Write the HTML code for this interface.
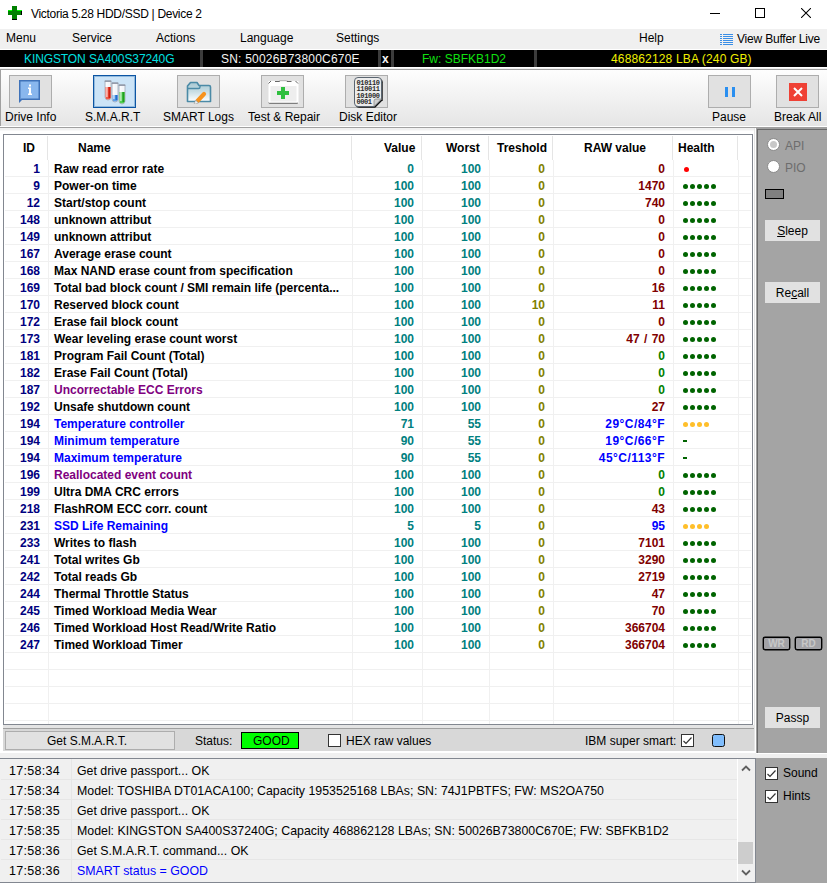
<!DOCTYPE html>
<html><head><meta charset="utf-8">
<style>
*{margin:0;padding:0;box-sizing:border-box}
html,body{width:827px;height:883px;overflow:hidden;background:#f0f0f0;font-family:"Liberation Sans",sans-serif;font-size:12px;color:#000}
.a{position:absolute}
.t{position:absolute;white-space:pre;line-height:14px}
/* title */
#title{left:0;top:0;width:827px;height:29px;background:#fff}
#menu{left:0;top:29px;width:827px;height:20px;background:#f0f0f0}
#infobar{left:0;top:50px;width:827px;height:17px;background:#000}
.sep{position:absolute;top:50px;width:3px;height:17px;background:#3c3c3c}
#toolbar{left:1px;top:69px;width:826px;height:57px;background:linear-gradient(#fefefe,#e5e5e5);border-top:1px solid #a0a0a0}
#tbl{left:0;top:69px;width:1px;height:57px;background:#a0a0a0}
.btn{position:absolute;top:75px;width:43px;height:33px;background:#e1e1e1;border:1px solid #adadad}
.btn.on{background:#cce4f7;border:1px solid #0c55a3;box-shadow:inset 0 0 0 1px rgba(14,89,166,0.3)}
.lbl{position:absolute;top:110px;white-space:pre;font-size:12px;line-height:14px}
/* grid */
#grid{left:3px;top:134px;width:750px;height:591px;background:#fff;border:1px solid #828790}
.row{position:absolute;left:0;width:827px;height:17px;font-weight:bold;font-size:12px}
.c{position:absolute;top:2px;white-space:pre;line-height:14px}
.id{right:calc(827px - 40px);color:#000080}
.nm{left:54px}
.val{right:calc(827px - 414px);color:#008080}
.wst{right:calc(827px - 481px);color:#008080}
.th{right:calc(827px - 545px);color:#808000}
.raw{right:calc(827px - 665px)}
.hl{position:absolute;left:683px;top:7px;height:6px;display:flex}
.d{display:block;width:5px;height:5px;border-radius:50%;margin-right:2px}
.d.g{background:#006400}
.d.y{background:#ffbf2a}
.d.rd{background:#ff0000;margin-left:1px}
.dash{display:block;width:4px;height:2px;background:#006400;margin-top:1px}
.hline{position:absolute;left:5px;width:746px;height:1px;background:#f0f0f0}
.vline{position:absolute;top:160px;width:1px;height:564px;background:#f0f0f0}
.vhead{position:absolute;top:136px;width:1px;height:24px;background:#e5e5e5}
.hd{position:absolute;top:141px;font-weight:bold;white-space:pre;line-height:14px}
/* right panel */
#rp{left:756px;top:128px;width:71px;height:625px;background:#a4a4a4;border-left:1px solid #a0a0a0;border-top:1px solid #a0a0a0;box-shadow:inset 1px 1px 0 #696969}
.rbtn{position:absolute;left:765px;width:55px;height:21px;background:#e1e1e1;text-align:center;line-height:23px;overflow:hidden}
/* status bar */
#sb{left:3px;top:728px;width:751px;height:23px;background:#d8d8d8;border-top:1px solid #a0a0a0}
/* log */
#log{left:0;top:758px;width:756px;height:125px;background:#f0f0f0;border-top:1px solid #828790;border-right:1px solid #828790;border-bottom:1px solid #828790}
.lrow{position:absolute;left:0;width:737px;height:20px}
.lt{position:absolute;left:9px;top:5px;white-space:pre;font-size:12.5px;line-height:14px;letter-spacing:0.3px}
.lm{position:absolute;left:77px;top:5px;white-space:pre;font-size:12.35px;line-height:14px}
.lline{position:absolute;left:1px;width:736px;height:1px;background:#e6e6e6}
#rp2{left:756px;top:758px;width:71px;height:125px;background:#a4a4a4}
.cb{position:absolute;width:13px;height:13px;background:#fff;border:1px solid #333}
</style></head><body>

<!-- title bar -->
<div id="title" class="a"></div>
<svg class="a" style="left:8px;top:6px" width="14" height="14" viewBox="0 0 14 14" shape-rendering="crispEdges">
<rect x="4" y="0" width="5" height="14" fill="#008000"/><rect x="0" y="4" width="14" height="5" fill="#008000"/>
<rect x="0" y="4" width="4" height="1" fill="#00ff00"/><rect x="9" y="4" width="5" height="1" fill="#00ff00"/>
<rect x="13" y="5" width="1" height="4" fill="#000"/><rect x="4" y="13" width="5" height="1" fill="#000"/>
</svg>
<div class="t" style="left:31px;top:7px;font-size:12px;letter-spacing:-0.3px">Victoria 5.28 HDD/SSD | Device 2</div>
<div class="a" style="left:710px;top:13px;width:10px;height:1px;background:#000"></div>
<div class="a" style="left:755px;top:8px;width:10px;height:10px;border:1px solid #000"></div>
<svg class="a" style="left:801px;top:8px" width="10" height="10" viewBox="0 0 10 10"><path d="M0 0L10 10M10 0L0 10" stroke="#000" stroke-width="1.05"/></svg>

<!-- menu -->
<div id="menu" class="a"></div>
<div class="t" style="left:6px;top:31px">Menu</div>
<div class="t" style="left:72px;top:31px">Service</div>
<div class="t" style="left:156px;top:31px">Actions</div>
<div class="t" style="left:240px;top:31px">Language</div>
<div class="t" style="left:336px;top:31px">Settings</div>
<div class="t" style="left:639px;top:31px">Help</div>
<svg class="a" style="left:720px;top:34px" width="13" height="12" viewBox="0 0 13 12">
<g fill="#3a8ee6"><rect x="0" y="0" width="2" height="1"/><rect x="3" y="0" width="10" height="1"/>
<rect x="0" y="2" width="2" height="1"/><rect x="3" y="2" width="10" height="1"/>
<rect x="0" y="4" width="2" height="1"/><rect x="3" y="4" width="10" height="1"/>
<rect x="0" y="6" width="2" height="1"/><rect x="3" y="6" width="10" height="1"/>
<rect x="0" y="8" width="2" height="1"/><rect x="3" y="8" width="10" height="1"/>
<rect x="0" y="10" width="2" height="1"/><rect x="3" y="10" width="10" height="1"/></g></svg>
<div class="t" style="left:737px;top:32px;letter-spacing:-0.2px">View Buffer Live</div>

<!-- info bar -->
<div class="a" style="left:0;top:49px;width:827px;height:1px;background:#fff"></div>
<div id="infobar" class="a"></div>
<div class="sep" style="left:200px"></div>
<div class="sep" style="left:378px"></div>
<div class="sep" style="left:391px"></div>
<div class="sep" style="left:534px"></div>
<div class="t" style="left:24px;top:52px;color:#00e0e0;letter-spacing:-0.1px">KINGSTON SA400S37240G</div>
<div class="t" style="left:221px;top:52px;color:#f4f4f4;letter-spacing:0.2px">SN: 50026B73800C670E</div>
<div class="t" style="left:382px;top:52px;color:#f4f4f4;font-weight:bold">x</div>
<div class="t" style="left:422px;top:52px;color:#10e010">Fw: SBFKB1D2</div>
<div class="t" style="left:611px;top:52px;color:#f0f000;letter-spacing:0.15px">468862128 LBA (240 GB)</div>
<div class="a" style="left:0;top:67px;width:827px;height:1px;background:#fff"></div>

<!-- toolbar -->
<div id="toolbar" class="a"></div>
<div id="tbl" class="a"></div>
<div class="btn" style="left:9px"></div>
<svg class="a" style="left:18px;top:79px" width="24" height="25" viewBox="0 0 24 25">
<path d="M1 1H22V21H4L1 24Z" fill="#3f72b9"/>
<path d="M2.5 2.5H20.5V19.5H3.2L2.5 20.5Z" fill="#89b7ee"/>
<rect x="11" y="5.5" width="2" height="2" fill="#fff"/>
<path d="M10 8.5H13V14.5H14V16H10V14.5H11V10H10Z" fill="#fff"/>
</svg>
<div class="lbl" style="left:5px">Drive Info</div>

<div class="btn on" style="left:93px"></div>
<svg class="a" style="left:104px;top:80px" width="22" height="26" viewBox="0 0 22 26"><path d="M1 1H7V17Q7 20 4 20Q1 20 1 17Z" fill="#f4f6fa" stroke="#a8b0bc" stroke-width="0.9"/><path d="M1.5 7H6.5V17Q6.5 19.5 4 19.5Q1.5 19.5 1.5 17Z" fill="#f05a4a"/><rect x="4.5" y="7" width="2" height="11" fill="#d02010"/><rect x="2.3" y="2" width="1.2" height="15" fill="#ffffff" opacity="0.8"/><rect x="0.7" y="0.5" width="6.6" height="1.3" fill="#8890a0"/><path d="M8 3H14V19Q14 22 11 22Q8 22 8 19Z" fill="#f4f6fa" stroke="#a8b0bc" stroke-width="0.9"/><path d="M8.5 15H13.5V19Q13.5 21.5 11 21.5Q8.5 21.5 8.5 19Z" fill="#5fa0e8"/><rect x="11.5" y="15" width="2" height="5" fill="#2070d0"/><rect x="9.3" y="4" width="1.2" height="15" fill="#ffffff" opacity="0.8"/><rect x="7.7" y="2.5" width="6.6" height="1.3" fill="#8890a0"/><path d="M15 5H21V21Q21 24 18 24Q15 24 15 21Z" fill="#f4f6fa" stroke="#a8b0bc" stroke-width="0.9"/><path d="M15.5 12H20.5V21Q20.5 23.5 18 23.5Q15.5 23.5 15.5 21Z" fill="#50d050"/><rect x="18.5" y="12" width="2" height="10" fill="#20a020"/><rect x="16.3" y="6" width="1.2" height="15" fill="#ffffff" opacity="0.8"/><rect x="14.7" y="4.5" width="6.6" height="1.3" fill="#8890a0"/></svg>
<div class="lbl" style="left:85px">S.M.A.R.T</div>

<div class="btn" style="left:177px"></div>
<svg class="a" style="left:186px;top:81px" width="26" height="23" viewBox="0 0 26 23">
<defs><linearGradient id="fg" x1="0" y1="0" x2="0" y2="1"><stop offset="0" stop-color="#a9c8d2"/><stop offset="0.45" stop-color="#c5dce3"/><stop offset="1" stop-color="#ffffff"/></linearGradient></defs>
<path d="M1.5 5L4.5 1.5H11L13 4.5H23Q24.5 4.5 24.5 6V20.5H1.5Z" fill="url(#fg)" stroke="#4b8aa6" stroke-width="1.6" stroke-linejoin="round"/>
<path d="M1.5 7.5H12.5Q14 7.5 14 6V4.5" fill="none" stroke="#4b8aa6" stroke-width="1.4"/>
<path d="M9.5 19L16.5 11.5Q18 10 19.5 11.5Q21 13 19.5 14.5L12.5 22Z" fill="#f7931e"/>
<path d="M9.5 19L12.5 22L8 23.5Z" fill="#f0f0f0" stroke="#888" stroke-width="0.5"/>
</svg>
<div class="lbl" style="left:163px">SMART Logs</div>

<div class="btn" style="left:261px"></div>
<svg class="a" style="left:268px;top:79px" width="31" height="26" viewBox="0 0 31 26">
<rect x="0.5" y="2" width="30" height="22.3" fill="#ffffff"/>
<rect x="2.5" y="7" width="26" height="15.5" fill="#eeeeee"/>
<path d="M0.5 4.5L3 2M27.5 2L30 4.5M7 2.5H11.5V1.8M19 1.8V2.5H23.5M0.5 23.8L1.2 24.3H29.3L30 23.8" fill="none" stroke="#555" stroke-width="0.9"/>
<rect x="12" y="1" width="6.5" height="1.2" fill="#bbb"/>
<path d="M13 8H17V12H21V16H17V20H13V16H9V12H13Z" fill="#2fbf3f"/>
</svg>
<div class="lbl" style="left:248px">Test &amp; Repair</div>

<div class="btn" style="left:345px"></div>
<svg class="a" style="left:353px;top:76px" width="31" height="32" viewBox="0 0 31 32">
<path d="M5 1.5H25Q28.5 1.5 28.5 5V23L21 30.5H5Q1.5 30.5 1.5 27V5Q1.5 1.5 5 1.5Z" fill="#111" transform="translate(1.2,1.2)"/>
<path d="M5 1.5H25Q28.5 1.5 28.5 5V23L21 30.5H5Q1.5 30.5 1.5 27V5Q1.5 1.5 5 1.5Z" fill="#ececec" stroke="#5a6570" stroke-width="1"/>
<path d="M21 30.5V25Q21 23 23 23H28.5Z" fill="#d0d0d0" stroke="#777" stroke-width="0.6"/>
<g font-family="Liberation Mono" font-weight="bold" font-size="7" fill="#2a2a2a"><text x="3.5" y="8.5" textLength="23.5">010110</text><text x="3.5" y="15" textLength="23.5">110011</text><text x="3.5" y="21.5" textLength="23.5">101000</text><text x="3.5" y="28" textLength="15.5">0001</text></g>
</svg>
<div class="lbl" style="left:339px">Disk Editor</div>

<div class="btn" style="left:708px"></div>
<div class="a" style="left:725px;top:87px;width:3px;height:10px;background:#2a8ff0"></div>
<div class="a" style="left:732px;top:87px;width:3px;height:10px;background:#2a8ff0"></div>
<div class="lbl" style="left:712px">Pause</div>
<div class="btn" style="left:776px"></div>
<svg class="a" style="left:789px;top:83px" width="18" height="18" viewBox="0 0 18 18">
<rect width="18" height="18" fill="#ef4135"/><path d="M5 5L13 13M13 5L5 13" stroke="#fff" stroke-width="2"/></svg>
<div class="lbl" style="left:774px">Break All</div>

<!-- below toolbar -->
<div class="a" style="left:0;top:126px;width:827px;height:1px;background:#fff"></div>
<div class="a" style="left:0;top:127px;width:827px;height:1px;background:#a0a0a0"></div>
<div class="a" style="left:0;top:128px;width:755px;height:2px;background:#f0f0f0"></div>
<div class="a" style="left:0;top:130px;width:755px;height:1px;background:#f8f8f8"></div>
<div class="a" style="left:0;top:131px;width:756px;height:620px;background:#fff"></div>
<div class="a" style="left:754px;top:128px;width:1px;height:625px;background:#e6e6e6"></div>
<div class="a" style="left:755px;top:128px;width:1px;height:625px;background:#fff"></div>

<!-- grid -->
<div id="grid" class="a"></div>
<div class="hline" style="top:176px"></div><div class="hline" style="top:193px"></div><div class="hline" style="top:210px"></div><div class="hline" style="top:227px"></div><div class="hline" style="top:244px"></div><div class="hline" style="top:261px"></div><div class="hline" style="top:278px"></div><div class="hline" style="top:295px"></div><div class="hline" style="top:312px"></div><div class="hline" style="top:329px"></div><div class="hline" style="top:346px"></div><div class="hline" style="top:363px"></div><div class="hline" style="top:380px"></div><div class="hline" style="top:397px"></div><div class="hline" style="top:414px"></div><div class="hline" style="top:431px"></div><div class="hline" style="top:448px"></div><div class="hline" style="top:465px"></div><div class="hline" style="top:482px"></div><div class="hline" style="top:499px"></div><div class="hline" style="top:516px"></div><div class="hline" style="top:533px"></div><div class="hline" style="top:550px"></div><div class="hline" style="top:567px"></div><div class="hline" style="top:584px"></div><div class="hline" style="top:601px"></div><div class="hline" style="top:618px"></div><div class="hline" style="top:635px"></div><div class="hline" style="top:652px"></div><div class="hline" style="top:669px"></div><div class="hline" style="top:686px"></div><div class="hline" style="top:703px"></div><div class="hline" style="top:720px"></div>
<div class="vline" style="left:48px"></div><div class="vhead" style="left:47px"></div><div class="vline" style="left:352px"></div><div class="vhead" style="left:351px"></div><div class="vline" style="left:422px"></div><div class="vhead" style="left:421px"></div><div class="vline" style="left:489px"></div><div class="vhead" style="left:488px"></div><div class="vline" style="left:553px"></div><div class="vhead" style="left:552px"></div><div class="vline" style="left:673px"></div><div class="vhead" style="left:672px"></div><div class="vline" style="left:738px"></div><div class="vhead" style="left:737px"></div>
<div class="hd" style="left:23px">ID</div>
<div class="hd" style="left:78px">Name</div>
<div class="hd" style="left:384px">Value</div>
<div class="hd" style="left:446px">Worst</div>
<div class="hd" style="left:497px">Treshold</div>
<div class="hd" style="left:584px">RAW value</div>
<div class="hd" style="left:678px">Health</div>
<div class="row" style="top:160px"><span class="c id">1</span><span class="c nm" style="color:#000000">Raw read error rate</span><span class="c val">0</span><span class="c wst">100</span><span class="c th">0</span><span class="c raw" style="color:#800000">0</span><span class="hl"><i class="d rd"></i></span></div><div class="row" style="top:177px"><span class="c id">9</span><span class="c nm" style="color:#000000">Power-on time</span><span class="c val">100</span><span class="c wst">100</span><span class="c th">0</span><span class="c raw" style="color:#800000">1470</span><span class="hl"><i class="d g"></i><i class="d g"></i><i class="d g"></i><i class="d g"></i><i class="d g"></i></span></div><div class="row" style="top:194px"><span class="c id">12</span><span class="c nm" style="color:#000000">Start/stop count</span><span class="c val">100</span><span class="c wst">100</span><span class="c th">0</span><span class="c raw" style="color:#800000">740</span><span class="hl"><i class="d g"></i><i class="d g"></i><i class="d g"></i><i class="d g"></i><i class="d g"></i></span></div><div class="row" style="top:211px"><span class="c id">148</span><span class="c nm" style="color:#000000">unknown attribut</span><span class="c val">100</span><span class="c wst">100</span><span class="c th">0</span><span class="c raw" style="color:#800000">0</span><span class="hl"><i class="d g"></i><i class="d g"></i><i class="d g"></i><i class="d g"></i><i class="d g"></i></span></div><div class="row" style="top:228px"><span class="c id">149</span><span class="c nm" style="color:#000000">unknown attribut</span><span class="c val">100</span><span class="c wst">100</span><span class="c th">0</span><span class="c raw" style="color:#800000">0</span><span class="hl"><i class="d g"></i><i class="d g"></i><i class="d g"></i><i class="d g"></i><i class="d g"></i></span></div><div class="row" style="top:245px"><span class="c id">167</span><span class="c nm" style="color:#000000">Average erase count</span><span class="c val">100</span><span class="c wst">100</span><span class="c th">0</span><span class="c raw" style="color:#800000">0</span><span class="hl"><i class="d g"></i><i class="d g"></i><i class="d g"></i><i class="d g"></i><i class="d g"></i></span></div><div class="row" style="top:262px"><span class="c id">168</span><span class="c nm" style="color:#000000">Max NAND erase count from specification</span><span class="c val">100</span><span class="c wst">100</span><span class="c th">0</span><span class="c raw" style="color:#800000">0</span><span class="hl"><i class="d g"></i><i class="d g"></i><i class="d g"></i><i class="d g"></i><i class="d g"></i></span></div><div class="row" style="top:279px"><span class="c id">169</span><span class="c nm" style="color:#000000">Total bad block count / SMI remain life (percenta...</span><span class="c val">100</span><span class="c wst">100</span><span class="c th">0</span><span class="c raw" style="color:#800000">16</span><span class="hl"><i class="d g"></i><i class="d g"></i><i class="d g"></i><i class="d g"></i><i class="d g"></i></span></div><div class="row" style="top:296px"><span class="c id">170</span><span class="c nm" style="color:#000000">Reserved block count</span><span class="c val">100</span><span class="c wst">100</span><span class="c th">10</span><span class="c raw" style="color:#800000">11</span><span class="hl"><i class="d g"></i><i class="d g"></i><i class="d g"></i><i class="d g"></i><i class="d g"></i></span></div><div class="row" style="top:313px"><span class="c id">172</span><span class="c nm" style="color:#000000">Erase fail block count</span><span class="c val">100</span><span class="c wst">100</span><span class="c th">0</span><span class="c raw" style="color:#800000">0</span><span class="hl"><i class="d g"></i><i class="d g"></i><i class="d g"></i><i class="d g"></i><i class="d g"></i></span></div><div class="row" style="top:330px"><span class="c id">173</span><span class="c nm" style="color:#000000">Wear leveling erase count worst</span><span class="c val">100</span><span class="c wst">100</span><span class="c th">0</span><span class="c raw" style="color:#800000;word-spacing:1px">47 / 70</span><span class="hl"><i class="d g"></i><i class="d g"></i><i class="d g"></i><i class="d g"></i><i class="d g"></i></span></div><div class="row" style="top:347px"><span class="c id">181</span><span class="c nm" style="color:#000000">Program Fail Count (Total)</span><span class="c val">100</span><span class="c wst">100</span><span class="c th">0</span><span class="c raw" style="color:#008000">0</span><span class="hl"><i class="d g"></i><i class="d g"></i><i class="d g"></i><i class="d g"></i><i class="d g"></i></span></div><div class="row" style="top:364px"><span class="c id">182</span><span class="c nm" style="color:#000000">Erase Fail Count (Total)</span><span class="c val">100</span><span class="c wst">100</span><span class="c th">0</span><span class="c raw" style="color:#008000">0</span><span class="hl"><i class="d g"></i><i class="d g"></i><i class="d g"></i><i class="d g"></i><i class="d g"></i></span></div><div class="row" style="top:381px"><span class="c id">187</span><span class="c nm" style="color:#800080">Uncorrectable ECC Errors</span><span class="c val">100</span><span class="c wst">100</span><span class="c th">0</span><span class="c raw" style="color:#008000">0</span><span class="hl"><i class="d g"></i><i class="d g"></i><i class="d g"></i><i class="d g"></i><i class="d g"></i></span></div><div class="row" style="top:398px"><span class="c id">192</span><span class="c nm" style="color:#000000">Unsafe shutdown count</span><span class="c val">100</span><span class="c wst">100</span><span class="c th">0</span><span class="c raw" style="color:#800000">27</span><span class="hl"><i class="d g"></i><i class="d g"></i><i class="d g"></i><i class="d g"></i><i class="d g"></i></span></div><div class="row" style="top:415px"><span class="c id">194</span><span class="c nm" style="color:#0000ff">Temperature controller</span><span class="c val">71</span><span class="c wst">55</span><span class="c th">0</span><span class="c raw" style="color:#0000ff;letter-spacing:0.45px">29°C/84°F</span><span class="hl"><i class="d y"></i><i class="d y"></i><i class="d y"></i><i class="d y"></i></span></div><div class="row" style="top:432px"><span class="c id">194</span><span class="c nm" style="color:#0000ff">Minimum temperature</span><span class="c val">90</span><span class="c wst">55</span><span class="c th">0</span><span class="c raw" style="color:#0000ff;letter-spacing:0.45px">19°C/66°F</span><span class="hl"><i class="dash"></i></span></div><div class="row" style="top:449px"><span class="c id">194</span><span class="c nm" style="color:#0000ff">Maximum temperature</span><span class="c val">90</span><span class="c wst">55</span><span class="c th">0</span><span class="c raw" style="color:#0000ff;letter-spacing:0.45px">45°C/113°F</span><span class="hl"><i class="dash"></i></span></div><div class="row" style="top:466px"><span class="c id">196</span><span class="c nm" style="color:#800080">Reallocated event count</span><span class="c val">100</span><span class="c wst">100</span><span class="c th">0</span><span class="c raw" style="color:#008000">0</span><span class="hl"><i class="d g"></i><i class="d g"></i><i class="d g"></i><i class="d g"></i><i class="d g"></i></span></div><div class="row" style="top:483px"><span class="c id">199</span><span class="c nm" style="color:#000000">Ultra DMA CRC errors</span><span class="c val">100</span><span class="c wst">100</span><span class="c th">0</span><span class="c raw" style="color:#008000">0</span><span class="hl"><i class="d g"></i><i class="d g"></i><i class="d g"></i><i class="d g"></i><i class="d g"></i></span></div><div class="row" style="top:500px"><span class="c id">218</span><span class="c nm" style="color:#000000">FlashROM ECC corr. count</span><span class="c val">100</span><span class="c wst">100</span><span class="c th">0</span><span class="c raw" style="color:#800000">43</span><span class="hl"><i class="d g"></i><i class="d g"></i><i class="d g"></i><i class="d g"></i><i class="d g"></i></span></div><div class="row" style="top:517px"><span class="c id">231</span><span class="c nm" style="color:#0000ff">SSD Life Remaining</span><span class="c val">5</span><span class="c wst">5</span><span class="c th">0</span><span class="c raw" style="color:#0000ff">95</span><span class="hl"><i class="d y"></i><i class="d y"></i><i class="d y"></i><i class="d y"></i></span></div><div class="row" style="top:534px"><span class="c id">233</span><span class="c nm" style="color:#000000">Writes to flash</span><span class="c val">100</span><span class="c wst">100</span><span class="c th">0</span><span class="c raw" style="color:#800000">7101</span><span class="hl"><i class="d g"></i><i class="d g"></i><i class="d g"></i><i class="d g"></i><i class="d g"></i></span></div><div class="row" style="top:551px"><span class="c id">241</span><span class="c nm" style="color:#000000">Total writes Gb</span><span class="c val">100</span><span class="c wst">100</span><span class="c th">0</span><span class="c raw" style="color:#800000">3290</span><span class="hl"><i class="d g"></i><i class="d g"></i><i class="d g"></i><i class="d g"></i><i class="d g"></i></span></div><div class="row" style="top:568px"><span class="c id">242</span><span class="c nm" style="color:#000000">Total reads Gb</span><span class="c val">100</span><span class="c wst">100</span><span class="c th">0</span><span class="c raw" style="color:#800000">2719</span><span class="hl"><i class="d g"></i><i class="d g"></i><i class="d g"></i><i class="d g"></i><i class="d g"></i></span></div><div class="row" style="top:585px"><span class="c id">244</span><span class="c nm" style="color:#000000">Thermal Throttle Status</span><span class="c val">100</span><span class="c wst">100</span><span class="c th">0</span><span class="c raw" style="color:#800000">47</span><span class="hl"><i class="d g"></i><i class="d g"></i><i class="d g"></i><i class="d g"></i><i class="d g"></i></span></div><div class="row" style="top:602px"><span class="c id">245</span><span class="c nm" style="color:#000000">Timed Workload Media Wear</span><span class="c val">100</span><span class="c wst">100</span><span class="c th">0</span><span class="c raw" style="color:#800000">70</span><span class="hl"><i class="d g"></i><i class="d g"></i><i class="d g"></i><i class="d g"></i><i class="d g"></i></span></div><div class="row" style="top:619px"><span class="c id">246</span><span class="c nm" style="color:#000000">Timed Workload Host Read/Write Ratio</span><span class="c val">100</span><span class="c wst">100</span><span class="c th">0</span><span class="c raw" style="color:#800000">366704</span><span class="hl"><i class="d g"></i><i class="d g"></i><i class="d g"></i><i class="d g"></i><i class="d g"></i></span></div><div class="row" style="top:636px"><span class="c id">247</span><span class="c nm" style="color:#000000">Timed Workload Timer</span><span class="c val">100</span><span class="c wst">100</span><span class="c th">0</span><span class="c raw" style="color:#800000">366704</span><span class="hl"><i class="d g"></i><i class="d g"></i><i class="d g"></i><i class="d g"></i><i class="d g"></i></span></div>

<!-- right panel -->
<div id="rp" class="a"></div>
<div class="a" style="left:767px;top:138px;width:13px;height:13px;border-radius:50%;background:#fff;border:1px solid #8a8a8a"></div>
<div class="a" style="left:770px;top:141px;width:7px;height:7px;border-radius:50%;background:#c8c8c8"></div>
<div class="t" style="left:785px;top:139px;color:#6d6d6d">API</div>
<div class="a" style="left:767px;top:160px;width:13px;height:13px;border-radius:50%;background:#fff;border:1px solid #8a8a8a"></div>
<div class="t" style="left:785px;top:161px;color:#6d6d6d">PIO</div>
<div class="a" style="left:765px;top:189px;width:19px;height:10px;background:#808080;border:1px solid #000"></div>
<div class="rbtn" style="top:220px"><u>S</u>leep</div>
<div class="rbtn" style="top:282px">Re<u>c</u>all</div>
<div class="a" style="left:763px;top:637px;width:27px;height:13px;border:1px solid #000;border-radius:2px;background:#a2a2a6;color:#c8c8c8;font-weight:bold;font-size:10px;line-height:12px;text-align:center;box-shadow:0 0 0 0.4px #000">WR</div>
<div class="a" style="left:795px;top:637px;width:27px;height:13px;border:1px solid #000;border-radius:2px;background:#a2a2a6;color:#c8c8c8;font-weight:bold;font-size:10px;line-height:12px;text-align:center;box-shadow:0 0 0 0.4px #000">RD</div>
<div class="rbtn" style="top:707px">Passp</div>

<!-- status bar -->
<div class="a" style="left:3px;top:725px;width:751px;height:3px;background:#e4e4e4"></div>
<div id="sb" class="a"></div>
<div class="a" style="left:5px;top:731px;width:170px;height:19px;background:#e1e1e1;border:1px solid #adadad"></div>
<div class="t" style="left:47px;top:734px">Get S.M.A.R.T.</div>
<div class="t" style="left:195px;top:734px">Status:</div>
<div class="a" style="left:241px;top:732px;width:58px;height:17px;background:#00ff00;border:1px solid #000"></div>
<div class="t" style="left:253px;top:734px">GOOD</div>
<div class="cb" style="left:328px;top:734px"></div>
<div class="t" style="left:346px;top:734px">HEX raw values</div>
<div class="t" style="left:585px;top:734px">IBM super smart:</div>
<div class="cb" style="left:681px;top:734px"></div>
<svg class="a" style="left:683px;top:737px" width="9" height="8" viewBox="0 0 9 8"><path d="M0.5 4L3 6.5L8.5 0.5" fill="none" stroke="#333" stroke-width="1.2"/></svg>
<div class="a" style="left:712px;top:734px;width:13px;height:13px;background:#80bdfc;border:1.5px solid #111;border-radius:2.5px"></div>
<div class="a" style="left:0;top:751px;width:756px;height:2px;background:#fff"></div>
<div class="a" style="left:0;top:753px;width:827px;height:5px;background:#f0f0f0"></div>
<div class="a" style="left:756px;top:753px;width:71px;height:1px;background:#fff"></div>

<!-- log -->
<div id="log" class="a"></div>
<div class="lrow" style="top:759px"><span class="lt">17:58:34</span><span class="lm" style="color:#000">Get drive passport... OK</span></div><div class="lline" style="top:779px"></div><div class="lrow" style="top:779px"><span class="lt">17:58:34</span><span class="lm" style="color:#000">Model: TOSHIBA DT01ACA100; Capacity 1953525168 LBAs; SN: 74J1PBTFS; FW: MS2OA750</span></div><div class="lline" style="top:799px"></div><div class="lrow" style="top:799px"><span class="lt">17:58:35</span><span class="lm" style="color:#000">Get drive passport... OK</span></div><div class="lline" style="top:819px"></div><div class="lrow" style="top:819px"><span class="lt">17:58:35</span><span class="lm" style="color:#000">Model: KINGSTON SA400S37240G; Capacity 468862128 LBAs; SN: 50026B73800C670E; FW: SBFKB1D2</span></div><div class="lline" style="top:839px"></div><div class="lrow" style="top:839px"><span class="lt">17:58:36</span><span class="lm" style="color:#000">Get S.M.A.R.T. command... OK</span></div><div class="lline" style="top:859px"></div><div class="lrow" style="top:859px"><span class="lt">17:58:36</span><span class="lm" style="color:#0000ff">SMART status = GOOD</span></div>
<div class="a" style="left:71px;top:759px;width:1px;height:122px;background:#e6e6e6"></div>
<div class="a" style="left:737px;top:759px;width:18px;height:122px;background:#f0f0f0;border-left:1px solid #fff"></div>
<svg class="a" style="left:741px;top:765px" width="10" height="7" viewBox="0 0 10 7"><path d="M1 5.5L5 1.5L9 5.5" fill="none" stroke="#606060" stroke-width="1.8"/></svg>
<div class="a" style="left:738px;top:842px;width:15px;height:22px;background:#cdcdcd"></div>
<svg class="a" style="left:741px;top:869px" width="10" height="7" viewBox="0 0 10 7"><path d="M1 1.5L5 5.5L9 1.5" fill="none" stroke="#606060" stroke-width="1.8"/></svg>

<div id="rp2" class="a"></div>
<div class="cb" style="left:765px;top:767px"></div>
<svg class="a" style="left:767px;top:770px" width="9" height="8" viewBox="0 0 9 8"><path d="M0.5 4L3 6.5L8.5 0.5" fill="none" stroke="#333" stroke-width="1.2"/></svg>
<div class="t" style="left:783px;top:766px">Sound</div>
<div class="cb" style="left:765px;top:790px"></div>
<svg class="a" style="left:767px;top:793px" width="9" height="8" viewBox="0 0 9 8"><path d="M0.5 4L3 6.5L8.5 0.5" fill="none" stroke="#333" stroke-width="1.2"/></svg>
<div class="t" style="left:783px;top:789px">Hints</div>

</body></html>
